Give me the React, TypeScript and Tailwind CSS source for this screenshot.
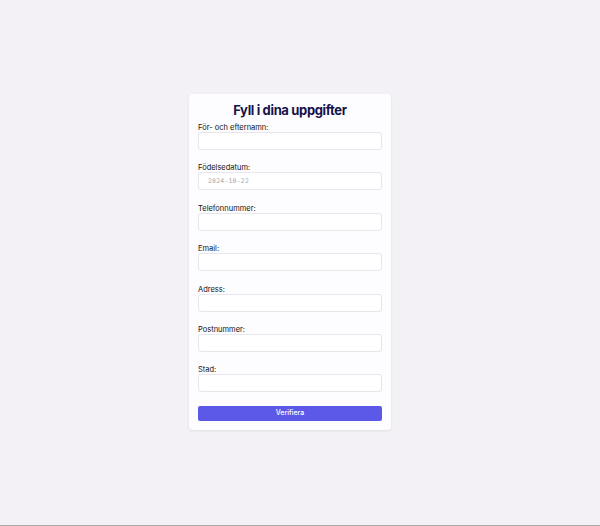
import React from "react";

const fields = [
  { label: "För- och efternamn:", placeholder: "" },
  { label: "Födelsedatum:", placeholder: "2024-10-22" },
  { label: "Telefonnummer:", placeholder: "" },
  { label: "Email:", placeholder: "" },
  { label: "Adress:", placeholder: "" },
  { label: "Postnummer:", placeholder: "" },
  { label: "Stad:", placeholder: "" },
];

export default function App() {
  return (
    <div
      className="w-[600px] h-[526px] bg-[#f3f1f5] border-b border-[#a9aaa2] flex items-center justify-center pr-[20px] pb-[1px]"
      style={{ fontFamily: "Inter, 'Noto Sans', sans-serif" }}
    >
      <div className="w-[202px] h-[336px] bg-[#fdfcfe] rounded-[4px] shadow-[0_1px_3px_rgba(0,0,0,0.08)] px-[9px] pt-[6px] pb-[9px] flex flex-col">
        <h1 className="text-[13px] leading-[20px] font-bold text-center text-[#16124a] tracking-[-0.35px] mb-[3px]">
          Fyll i dina uppgifter
        </h1>
        {fields.map((f) => (
          <div key={f.label} className="flex flex-col mb-[13.4px]">
            <label className="text-[7.5px] leading-[9px] text-[#111]">{f.label}</label>
            <input
              readOnly
              placeholder={f.placeholder}
              className="h-[18px] w-full bg-white border border-[#e6e6ec] rounded-[3px] pl-[9px] text-[6.4px] tracking-[0.25px] placeholder:text-[#a6a6ad] outline-none"
              style={{ fontFamily: "'DejaVu Sans Mono', monospace" }}
            />
          </div>
        ))}
        <button className="mt-0 h-[16px] w-full bg-[#5c59e9] rounded-[2px] text-white text-[7px] font-medium">
          Verifiera
        </button>
      </div>
    </div>
  );
}
